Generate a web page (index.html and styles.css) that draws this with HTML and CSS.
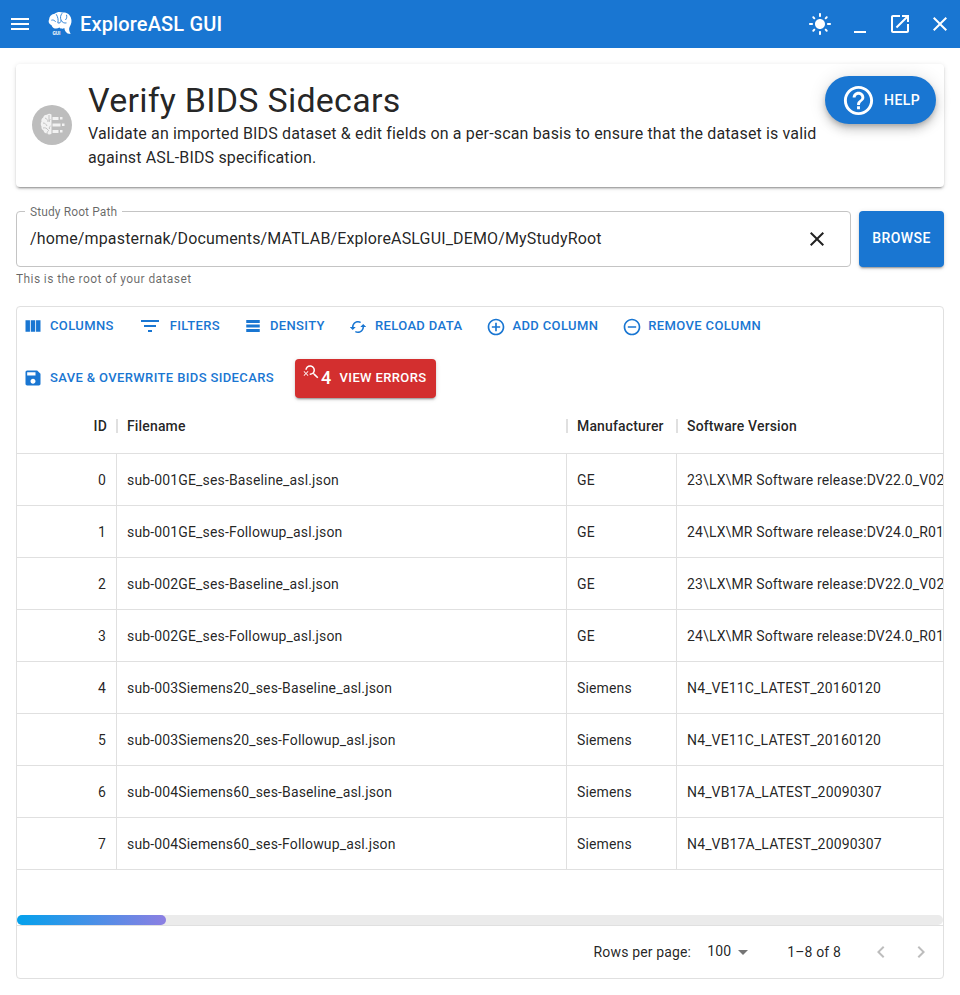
FILE: index.html
```html
<!DOCTYPE html>
<html lang="en">
<head>
    <meta charset="UTF-8">
    <meta name="viewport" content="width=device-width, initial-scale=1.0">
    <title>ExploreASL GUI</title>
    <link rel="stylesheet" href="styles.css">
</head>
<body>
    <header class="appbar">
        <svg class="bar-icon menu-icon" viewBox="0 0 24 24"><path d="M3 18h18v-2H3v2zm0-5h18v-2H3v2zm0-7v2h18V6H3z"/></svg>
        <svg class="logo" viewBox="0 0 24 24">
            <path d="M2 7.5C2.5 4 5 3 7 2.6 9 .8 12 .4 14.5 1.4c3-.4 6.500 1.400 7.500 4.600 1.200 3 .6 6-1 8.500-.6 1-.8 2.500-.2 4.500l1 2.200-2.800-.4c-2-1.200-2.800-3-3-5-1.500 .8-3.500 .6-4.500-.6-1.500 1.200-4 1.400-5.500 .4-1-.8-1.500-1.600-1.800-2.500C1 11.500 1.300 9 2 7.500z" fill="#fff"/>
            <path d="M8.500 3c1.500 2.500 2.200 5 1.500 8M14 2c-1.500 2-2 4-1 6.500 1 2 3 3 5 2.500M10 11c1.500 .5 3-.3 3-2.500M18 3.500c.5 2 .2 3.500-1 4.800M4 8.500c1.500-.5 3 0 4 1.500" fill="none" stroke="#1976d2" stroke-width=".8"/>
            <text class="logo-text" x="5" y="22.500">GUI</text>
        </svg>
        <div class="app-title">ExploreASL GUI</div>
        <div class="bar-actions">
            <svg class="bar-icon" viewBox="0 0 24 24"><path d="M12 7c-2.760 0-5 2.240-5 5s2.240 5 5 5 5-2.240 5-5-2.240-5-5-5zM2 13h2c.55 0 1-.45 1-1s-.45-1-1-1H2c-.55 0-1 .45-1 1s.45 1 1 1zm18 0h2c.55 0 1-.45 1-1s-.45-1-1-1h-2c-.55 0-1 .45-1 1s.45 1 1 1zM11 2v2c0 .55.45 1 1 1s1-.45 1-1V2c0-.55-.45-1-1-1s-1 .45-1 1zm0 18v2c0 .55.45 1 1 1s1-.45 1-1v-2c0-.55-.45-1-1-1s-1 .45-1 1zM5.990 4.580c-.39-.39-1.030-.39-1.410 0-.39.39-.39 1.030 0 1.410l1.060 1.060c.39.39 1.030.39 1.410 0s.39-1.030 0-1.410L5.990 4.580zm12.370 12.370c-.39-.39-1.030-.39-1.410 0-.39.39-.39 1.030 0 1.410l1.060 1.060c.39.39 1.030.39 1.410 0 .39-.39.39-1.030 0-1.410l-1.060-1.060zm1.060-10.960c.39-.39.39-1.030 0-1.410-.39-.39-1.030-.39-1.410 0l-1.060 1.060c-.39.39-.39 1.030 0 1.410s1.030.39 1.410 0l1.060-1.060zM7.050 18.360c.39-.39.39-1.030 0-1.410-.39-.39-1.030-.39-1.410 0l-1.060 1.060c-.39.39-.39 1.030 0 1.410s1.030.39 1.410 0l1.060-1.060z"/></svg>
            <svg class="bar-icon" viewBox="0 0 24 24"><path d="M6 19h12v2H6z"/></svg>
            <svg class="bar-icon" viewBox="0 0 24 24"><path d="M19 19H5V5h7V3H5c-1.110 0-2 .9-2 2v14c0 1.100.89 2 2 2h14c1.100 0 2-.9 2-2v-7h-2v7zM14 3v2h3.590l-9.830 9.830 1.410 1.410L19 6.410V10h2V3h-7z"/></svg>
            <svg class="bar-icon" viewBox="0 0 24 24"><path d="M19 6.410 17.590 5 12 10.590 6.410 5 5 6.410 10.590 12 5 17.590 6.410 19 12 13.410 17.590 19 19 17.590 13.410 12z"/></svg>
        </div>
    </header>

    <main class="page">
        <section class="card">
            <div class="avatar">
                <svg viewBox="0 0 40 40">
                    <path d="M19.500 9.500c-1.500-1-3.500-.8-4.500 .2-2-.2-3.500 1-3.800 2.800-1.500 .8-2.200 2.500-1.700 4-1 1.500-1 3.500 0 5-.3 1.800 .5 3.300 2 4 .3 1.800 1.800 3 3.500 3 1.200 1.200 3 1.200 4.500 .3z" fill="#f2f2f2"/>
                    <path d="M17 10v6M13 13c2 1 3 2 3 4M11 18c2 0 3 1 4 3M11 23c2-.5 4 0 5 2M15 29c0-2 1-3 2-4M18.500 14c-1 1-1.500 2-1 3M18.500 21c-1 .5-1.500 1.500-1 3" fill="none" stroke="#bdbdbd" stroke-width=".9"/>
                    <path d="M20.500 12h6v3h-6zM20.500 18.500h8v3h-8zM20.500 25h6v3h-6z" fill="#f2f2f2"/>
                    <path d="M28 12h2.500v2.500H28zM30 18.500h2.500V21H30zM28 25h2.500v2.500H28z" fill="#f2f2f2"/>
                </svg>
            </div>
            <div class="card-text">
                <h1 class="card-title">Verify BIDS Sidecars</h1>
                <p class="card-sub">Validate an imported BIDS dataset &amp; edit fields on a per-scan basis to ensure that the dataset is valid against ASL-BIDS specification.</p>
            </div>
            <button class="help-fab">
                <svg viewBox="0 0 24 24"><path d="M11 18h2v-2h-2v2zm1-16C6.480 2 2 6.480 2 12s4.480 10 10 10 10-4.480 10-10S17.520 2 12 2zm0 18c-4.410 0-8-3.590-8-8s3.590-8 8-8 8 3.590 8 8-3.590 8-8 8zm0-14c-2.210 0-4 1.790-4 4h2c0-1.100.9-2 2-2s2 .9 2 2c0 2-3 1.750-3 5h2c0-2.250 3-2.500 3-5 0-2.210-1.790-4-4-4z"/></svg>
                HELP
            </button>
        </section>

        <section class="path-row">
            <div class="path-field">
                <span class="path-label">Study Root Path</span>
                <span class="path-value">/home/mpasternak/Documents/MATLAB/ExploreASLGUI_DEMO/MyStudyRoot</span>
                <svg class="clear-icon" viewBox="0 0 24 24"><path d="M19 6.410 17.590 5 12 10.590 6.410 5 5 6.410 10.590 12 5 17.590 6.410 19 12 13.410 17.590 19 19 17.590 13.410 12z"/></svg>
            </div>
            <button class="browse-btn">BROWSE</button>
        </section>
        <p class="helper">This is the root of your dataset</p>

        <section class="grid">
            <div class="toolbar">
                <button class="tool-btn">
                    <svg class="ico-20" viewBox="0 0 24 24"><path d="M14.670 5v14H9.330V5h5.340zm1 14H21V5h-5.330v14zm-7.340 0V5H3v14h5.330z"/></svg>
                    COLUMNS
                </button>
                <button class="tool-btn">
                    <svg class="ico-24" viewBox="0 0 24 24"><path d="M10 18h4v-2h-4v2zM3 6v2h18V6H3zm3 7h12v-2H6v2z"/></svg>
                    FILTERS
                </button>
                <button class="tool-btn">
                    <svg class="ico-18" viewBox="0 0 24 24"><path d="M21 8H3V4h18v4zm0 2H3v4h18v-4zm0 6H3v4h18v-4z"/></svg>
                    DENSITY
                </button>
                <button class="tool-btn">
                    <svg class="ico-18 ico-low" viewBox="0 0 24 24"><path d="M19 8l-4 4h3c0 3.310-2.690 6-6 6-1.010 0-1.970-.25-2.800-.7l-1.460 1.460C8.970 19.540 10.430 20 12 20c4.420 0 8-3.580 8-8h3l-4-4zM6 12c0-3.310 2.690-6 6-6 1.010 0 1.970.25 2.800.7l1.460-1.460C15.030 4.460 13.570 4 12 4c-4.420 0-8 3.580-8 8H1l4 4 4-4H6z"/></svg>
                    RELOAD DATA
                </button>
                <button class="tool-btn">
                    <svg class="ico-20 ico-low" viewBox="0 0 24 24"><path d="M13 7h-2v4H7v2h4v4h2v-4h4v-2h-4V7zm-1-5C6.480 2 2 6.480 2 12s4.480 10 10 10 10-4.480 10-10S17.520 2 12 2zm0 18c-4.410 0-8-3.590-8-8s3.590-8 8-8 8 3.590 8 8-3.590 8-8 8z"/></svg>
                    ADD COLUMN
                </button>
                <button class="tool-btn">
                    <svg class="ico-20 ico-low" viewBox="0 0 24 24"><path d="M7 11v2h10v-2H7zm5-9C6.480 2 2 6.480 2 12s4.480 10 10 10 10-4.480 10-10S17.520 2 12 2zm0 18c-4.410 0-8-3.590-8-8s3.590-8 8-8 8 3.590 8 8-3.590 8-8 8z"/></svg>
                    REMOVE COLUMN
                </button>
                <button class="tool-btn">
                    <svg class="ico-20" viewBox="0 0 24 24"><path d="M17 3H5c-1.110 0-2 .9-2 2v14c0 1.100.89 2 2 2h14c1.100 0 2-.9 2-2V7l-4-4zm-5 16c-1.660 0-3-1.340-3-3s1.340-3 3-3 3 1.340 3 3-1.340 3-3 3zm3-10H5V5h10v4z"/></svg>
                    SAVE &amp; OVERWRITE BIDS SIDECARS
                </button>
                <button class="errors-btn">
                    <svg viewBox="0 0 24 24"><path d="M15.500 14h-.79l-.28-.27C15.410 12.590 16 11.110 16 9.500 16 5.910 13.090 3 9.500 3 6.080 3 3.280 5.640 3.030 9h2.020C5.300 6.750 7.180 5 9.500 5 11.990 5 14 7.010 14 9.500S11.990 14 9.500 14c-.17 0-.33-.03-.5-.05v2.020c.17.02.33.03.5.03 1.610 0 3.090-.59 4.230-1.570l.27.28v.79l5 4.990L20.490 19l-4.990-5z"/><path d="M6.470 10.820 4 13.290l-2.470-2.470-.71.71L3.290 14 .82 16.470l.71.71L4 14.710l2.470 2.470.71-.71L4.710 14l2.470-2.470z"/></svg>
                    <span class="error-count">4</span>
                    VIEW ERRORS
                </button>
            </div>

            <div class="table-head">
                <div class="cell col-id">ID</div>
                <div class="cell col-file">Filename</div>
                <div class="cell col-maker">Manufacturer</div>
                <div class="cell col-ver">Software Version</div>
            </div>
            <div class="table-body">
                <div class="row"><div class="cell col-id">0</div><div class="cell col-file">sub-001GE_ses-Baseline_asl.json</div><div class="cell col-maker">GE</div><div class="cell col-ver">23\LX\MR Software release:DV22.0_V02</div></div>
                <div class="row"><div class="cell col-id">1</div><div class="cell col-file">sub-001GE_ses-Followup_asl.json</div><div class="cell col-maker">GE</div><div class="cell col-ver">24\LX\MR Software release:DV24.0_R01</div></div>
                <div class="row"><div class="cell col-id">2</div><div class="cell col-file">sub-002GE_ses-Baseline_asl.json</div><div class="cell col-maker">GE</div><div class="cell col-ver">23\LX\MR Software release:DV22.0_V02</div></div>
                <div class="row"><div class="cell col-id">3</div><div class="cell col-file">sub-002GE_ses-Followup_asl.json</div><div class="cell col-maker">GE</div><div class="cell col-ver">24\LX\MR Software release:DV24.0_R01</div></div>
                <div class="row"><div class="cell col-id">4</div><div class="cell col-file">sub-003Siemens20_ses-Baseline_asl.json</div><div class="cell col-maker">Siemens</div><div class="cell col-ver">N4_VE11C_LATEST_20160120</div></div>
                <div class="row"><div class="cell col-id">5</div><div class="cell col-file">sub-003Siemens20_ses-Followup_asl.json</div><div class="cell col-maker">Siemens</div><div class="cell col-ver">N4_VE11C_LATEST_20160120</div></div>
                <div class="row"><div class="cell col-id">6</div><div class="cell col-file">sub-004Siemens60_ses-Baseline_asl.json</div><div class="cell col-maker">Siemens</div><div class="cell col-ver">N4_VB17A_LATEST_20090307</div></div>
                <div class="row"><div class="cell col-id">7</div><div class="cell col-file">sub-004Siemens60_ses-Followup_asl.json</div><div class="cell col-maker">Siemens</div><div class="cell col-ver">N4_VB17A_LATEST_20090307</div></div>
            </div>
            <div class="scroll-track"><div class="scroll-thumb"></div></div>

            <div class="pager">
                <span class="pager-label">Rows per page:</span>
                <span class="pager-size">100</span>
                <svg class="pager-arrow" viewBox="0 0 24 24"><path d="M7 10l5 5 5-5z"/></svg>
                <span class="pager-count">1–8 of 8</span>
                <svg class="pager-nav" viewBox="0 0 24 24"><path d="M15.410 7.410 14 6l-6 6 6 6 1.410-1.410L10.830 12z"/></svg>
                <svg class="pager-nav" viewBox="0 0 24 24"><path d="M10 6 8.590 7.410 13.170 12l-4.580 4.580L10 18l6-6z"/></svg>
            </div>
        </section>
    </main>
</body>
</html>
```

FILE: styles.css
```css
* {
    box-sizing: border-box;
}

html, body {
    height: 100%;
}

body {
    display: flex;
    flex-direction: column;
    margin: 0;
    background-color: #ffffff;
    color: rgba(0, 0, 0, 0.87);
    font-family: Roboto, "Liberation Sans", sans-serif;
    overflow: hidden;
}

button {
    border: none;
    background: none;
    font-family: inherit;
    cursor: pointer;
}

/* App bar */
.appbar {
    display: flex;
    align-items: center;
    flex: none;
    height: 48px;
    padding: 0 8px;
    background-color: #1976d2;
    color: #ffffff;
}

.bar-icon {
    width: 24px;
    height: 24px;
    fill: #ffffff;
}

.logo {
    width: 26px;
    height: 26px;
    margin-left: 15px;
    margin-right: 7px;
}

.logo-text {
    font-size: 4.500px;
    font-weight: 700;
    fill: #ffffff;
}

.app-title {
    font-size: 20px;
    font-weight: 500;
    letter-spacing: 0.15px;
}

.bar-actions {
    display: flex;
    align-items: center;
    gap: 16px;
    margin-left: auto;
}

/* Page */
.page {
    display: flex;
    flex-direction: column;
    flex: 1;
    min-height: 0;
    padding: 16px;
}

.card {
    position: relative;
    display: flex;
    align-items: center;
    flex: none;
    height: 123px;
    padding: 0 16px;
    border-radius: 4px;
    box-shadow: 0 3px 1px -2px rgba(0, 0, 0, 0.2), 0 2px 2px 0 rgba(0, 0, 0, 0.14), 0 1px 5px 0 rgba(0, 0, 0, 0.12);
}

.avatar {
    flex: none;
    width: 40px;
    height: 40px;
    margin-right: 16px;
    margin-bottom: 1px;
    border-radius: 50%;
    background-color: #bdbdbd;
}

.avatar svg {
    display: block;
    width: 40px;
    height: 40px;
}

.card-text {
    width: 740px;
    margin-bottom: 2px;
}

.card-title {
    margin: 0;
    font-size: 34px;
    font-weight: 400;
    line-height: 42px;
    letter-spacing: 0.25px;
}

.card-sub {
    margin: 1px 0 0;
    font-size: 16px;
    line-height: 24px;
    letter-spacing: 0.15px;
}

.help-fab {
    position: absolute;
    top: 12px;
    right: 8px;
    display: flex;
    align-items: center;
    gap: 8px;
    height: 48px;
    padding: 0 16px;
    border-radius: 24px;
    background-color: #1976d2;
    color: #ffffff;
    font-size: 14px;
    font-weight: 500;
    letter-spacing: 0.4px;
    box-shadow: 0 3px 5px -1px rgba(0, 0, 0, 0.2), 0 6px 10px 0 rgba(0, 0, 0, 0.14), 0 1px 18px 0 rgba(0, 0, 0, 0.12);
}

.help-fab svg {
    width: 35px;
    height: 35px;
    fill: #ffffff;
}

/* Path field */
.path-row {
    display: flex;
    flex: none;
    gap: 8px;
    margin-top: 24px;
}

.path-field {
    position: relative;
    display: flex;
    align-items: center;
    flex: 1;
    height: 56px;
    padding: 0 21px 0 13px;
    border: 1px solid #c4c4c4;
    border-radius: 4px;
}

.path-label {
    position: absolute;
    top: -7px;
    left: 8px;
    padding: 0 5px;
    background-color: #ffffff;
    color: rgba(0, 0, 0, 0.6);
    font-size: 12px;
    line-height: 14px;
    letter-spacing: 0.1px;
}

.path-value {
    flex: 1;
    margin-bottom: 2px;
    font-size: 16px;
    letter-spacing: 0.15px;
}

.clear-icon {
    width: 24px;
    height: 24px;
    fill: rgba(0, 0, 0, 0.87);
}

.browse-btn {
    width: 85px;
    height: 56px;
    padding: 0 0 2px;
    border-radius: 4px;
    background-color: #1976d2;
    color: #ffffff;
    font-size: 14px;
    font-weight: 500;
    letter-spacing: 0.4px;
    box-shadow: 0 3px 1px -2px rgba(0, 0, 0, 0.2), 0 2px 2px 0 rgba(0, 0, 0, 0.14), 0 1px 5px 0 rgba(0, 0, 0, 0.12);
}

.helper {
    flex: none;
    margin: 2px 0 17px;
    color: rgba(0, 0, 0, 0.6);
    font-size: 12px;
    line-height: 20px;
    letter-spacing: 0.4px;
}

/* Data grid */
.grid {
    display: flex;
    flex-direction: column;
    flex: 1;
    min-height: 0;
    border: 1px solid #e0e0e0;
    border-radius: 4px;
    overflow: hidden;
}

.toolbar {
    display: flex;
    flex-wrap: wrap;
    align-items: center;
    flex: none;
    gap: 17px 14px;
    padding: 4px 1px;
}

.tool-btn {
    display: flex;
    align-items: center;
    gap: 7px;
    height: 31px;
    padding: 0 5px 2px;
    color: #1976d2;
    font-size: 13px;
    font-weight: 500;
    letter-spacing: 0.37px;
}

.tool-btn svg {
    fill: #1976d2;
}

.ico-18 {
    width: 18px;
    height: 18px;
    margin-right: 1px;
}

.ico-20 {
    width: 20px;
    height: 20px;
}

.ico-24 {
    width: 24px;
    height: 24px;
    margin-right: 1px;
}

/* reload and add/remove sit a little under the label */
.ico-low {
    margin-top: 2px;
}

.ico-20.ico-low {
    margin-right: -1px;
}

.errors-btn {
    display: flex;
    align-items: center;
    height: 39px;
    margin-left: 2px;
    padding: 0 10px 2px 8px;
    border-radius: 4px;
    background-color: #d32f2f;
    color: #ffffff;
    font-size: 13px;
    font-weight: 500;
    letter-spacing: 0.37px;
    box-shadow: 0 3px 1px -2px rgba(0, 0, 0, 0.2), 0 2px 2px 0 rgba(0, 0, 0, 0.14), 0 1px 5px 0 rgba(0, 0, 0, 0.12);
}

.errors-btn svg {
    align-self: flex-start;
    width: 18px;
    height: 18px;
    margin-top: 4px;
    fill: #ffffff;
}

.error-count {
    margin-right: 8px;
    font-size: 18px;
}

.table-head, .row {
    display: flex;
    flex: none;
    height: 52px;
    border-bottom: 1px solid #e0e0e0;
    white-space: nowrap;
}

.table-head .cell {
    position: relative;
    padding-bottom: 4px;
    border-right: none;
    font-weight: 500;
}

/* small separators between the header titles */
.table-head .cell::after {
    content: "";
    position: absolute;
    top: 17px;
    right: -1px;
    width: 2px;
    height: 14px;
    background-color: #e0e0e0;
}

.table-head .col-ver::after {
    display: none;
}

.table-body {
    flex: 1;
    min-height: 0;
}

.cell {
    display: flex;
    align-items: center;
    flex: none;
    padding: 0 10px;
    border-right: 1px solid #e0e0e0;
    font-size: 14px;
    letter-spacing: 0.15px;
}

.col-id {
    justify-content: flex-end;
    width: 100px;
}

.col-file {
    width: 450px;
}

.col-maker {
    width: 110px;
}

.col-ver {
    width: 266px;
    padding-right: 0;
    border-right: none;
}

.scroll-track {
    flex: none;
    height: 10px;
    border-radius: 5px;
    background-color: #ebebeb;
}

.scroll-thumb {
    width: 149px;
    height: 10px;
    border-radius: 5px;
    background: linear-gradient(90deg, #03a1ec, #8c7fe2);
}

.pager {
    display: flex;
    align-items: center;
    flex: none;
    height: 53px;
    padding-right: 2px;
    border-top: 1px solid #e0e0e0;
    font-size: 14px;
    letter-spacing: 0.15px;
    justify-content: flex-end;
}

.pager-size {
    margin-left: 16px;
    margin-top: -2px;
}

.pager-arrow {
    width: 24px;
    height: 24px;
    margin-right: 32px;
    fill: rgba(0, 0, 0, 0.54);
}

.pager-count {
    margin-right: 12px;
}

.pager-nav {
    width: 24px;
    height: 24px;
    margin: 0 8px;
    fill: rgba(0, 0, 0, 0.26);
}

.pager-count + .pager-nav {
    margin-left: 16px;
}
```
